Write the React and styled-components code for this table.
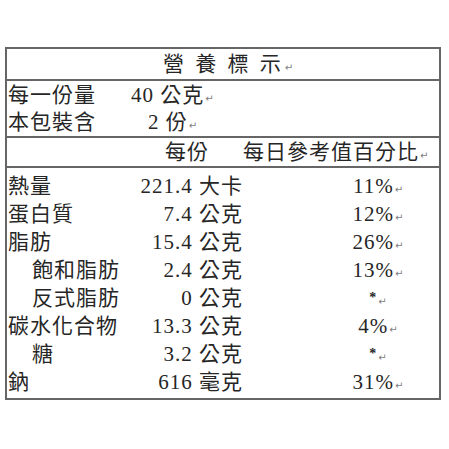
import React from 'react';
import styled, { createGlobalStyle } from 'styled-components';

const GlobalStyle = createGlobalStyle`
  html, body {
    margin: 0;
    padding: 0;
    background: #ffffff;
  }
  body {
    font-family: "Liberation Serif", "Noto Sans CJK TC", serif;
    color: #262626;
  }
`;

const Page = styled.div`
  width: 449px;
  height: 449px;
  padding: 47px 0 0 5px;
  box-sizing: border-box;
`;

const Label = styled.div`
  width: 436px;
  border: 2px solid #666666;
  box-sizing: border-box;
  font-size: 21px;
  letter-spacing: 1px;
`;

const Title = styled.div`
  height: 30px;
  line-height: 30px;
  text-align: center;
  letter-spacing: 3px;
  padding-left: 10px;
  border-bottom: 2px solid #666666;
`;

const Serving = styled.div`
  padding-top: 1px;
  border-bottom: 2px solid #666666;
`;

const ServingRow = styled.div`
  display: grid;
  grid-template-columns: 123px 1fr;
  height: 27px;
  line-height: 27px;
  padding-left: 1px;
`;

const ServingValue = styled.span`
  padding-left: ${(p) => p.$offset || 0}px;
`;

const HeaderRow = styled.div`
  display: flex;
  gap: 34px;
  height: 28px;
  line-height: 28px;
  padding-left: 158px;
  border-bottom: 2px solid #666666;
`;

const Nutrients = styled.div`
  padding: 4px 0 2px;
`;

const NutrientRow = styled.div`
  display: grid;
  grid-template-columns: 120px 116px 1fr;
  height: 28px;
  line-height: 28px;
`;

const Name = styled.span`
  padding-left: ${(p) => (p.$sub ? 25 : 1)}px;
  white-space: nowrap;
`;

const Amount = styled.span`
  text-align: right;
  white-space: nowrap;
`;

const Percent = styled.span`
  padding-left: 74px;
  text-align: center;
  white-space: nowrap;
`;

const Star = styled.span`
  font-size: 14px;
  font-weight: bold;
  position: relative;
  top: -3px;
`;

const Mark = styled.span`
  font-family: "DejaVu Sans", sans-serif;
  font-size: 10px;
  color: #7d7d7d;
  letter-spacing: 0;
  margin-left: 1px;
`;

const nutrients = [
  { name: '熱量', amount: '221.4 大卡', pct: '11%' },
  { name: '蛋白質', amount: '7.4 公克', pct: '12%' },
  { name: '脂肪', amount: '15.4 公克', pct: '26%' },
  { name: '飽和脂肪', amount: '2.4 公克', pct: '13%', sub: true },
  { name: '反式脂肪', amount: '0 公克', pct: '*', sub: true },
  { name: '碳水化合物', amount: '13.3 公克', pct: '4%' },
  { name: '糖', amount: '3.2 公克', pct: '*', sub: true },
  { name: '鈉', amount: '616 毫克', pct: '31%' },
];

export default function App() {
  return (
    <Page>
      <GlobalStyle />
      <Label>
        <Title>
          營 養 標 示<Mark>↵</Mark>
        </Title>
        <Serving>
          <ServingRow>
            <span>每一份量</span>
            <ServingValue>
              40 公克<Mark>↵</Mark>
            </ServingValue>
          </ServingRow>
          <ServingRow>
            <span>本包裝含</span>
            <ServingValue $offset={17}>
              2 份<Mark>↵</Mark>
            </ServingValue>
          </ServingRow>
        </Serving>
        <HeaderRow>
          <span>每份</span>
          <span>
            每日參考值百分比<Mark>↵</Mark>
          </span>
        </HeaderRow>
        <Nutrients>
          {nutrients.map((n) => (
            <NutrientRow key={n.name}>
              <Name $sub={n.sub}>{n.name}</Name>
              <Amount>{n.amount}</Amount>
              <Percent>
                {n.pct === '*' ? <Star>*</Star> : n.pct}
                <Mark>↵</Mark>
              </Percent>
            </NutrientRow>
          ))}
        </Nutrients>
      </Label>
    </Page>
  );
}
